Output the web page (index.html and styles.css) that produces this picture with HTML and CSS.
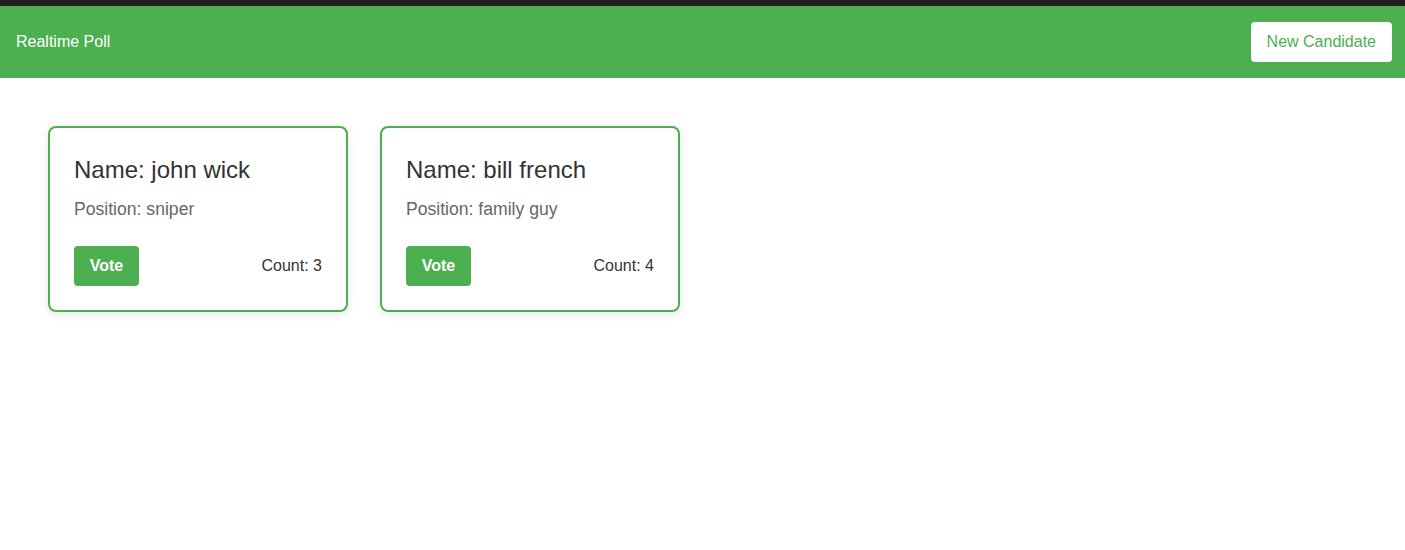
FILE: index.html
```html
<!DOCTYPE html>
<html>
<head>
<meta charset="utf-8">
<title>Realtime Poll</title>
<link rel="stylesheet" href="styles.css">
</head>
<body>
<div class="topbar"></div>
<nav class="nav">
  <span class="brand">Realtime Poll</span>
  <button class="new-btn">New Candidate</button>
</nav>
<main class="main">
  <div class="card">
    <h2 class="name">Name: john wick</h2>
    <p class="position">Position: sniper</p>
    <div class="card-foot">
      <button class="vote">Vote</button>
      <span class="count">Count: 3</span>
    </div>
  </div>
  <div class="card">
    <h2 class="name">Name: bill french</h2>
    <p class="position">Position: family guy</p>
    <div class="card-foot">
      <button class="vote">Vote</button>
      <span class="count">Count: 4</span>
    </div>
  </div>
</main>
</body>
</html>
```
FILE: styles.css
```css
* { box-sizing: border-box; }
html, body {
  margin: 0;
  padding: 0;
  background: #fff;
  font-family: "Liberation Sans", Arial, sans-serif;
  color: #333;
}
.topbar {
  height: 6px;
  background: #202020;
}
.nav {
  height: 72px;
  background: #4caf50;
  display: flex;
  align-items: center;
  justify-content: space-between;
  padding: 0 13px 0 16px;
}
.brand {
  color: #fff;
  font-size: 16px;
}
.new-btn {
  height: 40px;
  padding: 0 16px;
  background: #fff;
  color: #4caf50;
  border: none;
  border-radius: 4px;
  font-family: inherit;
  font-size: 16px;
}
.main {
  display: flex;
  gap: 32px;
  padding: 48px;
}
.card {
  width: 300px;
  border: 2px solid #4caf50;
  border-radius: 8px;
  padding: 24px;
  box-shadow: 0 2px 8px rgba(0, 0, 0, 0.1);
}
.name {
  margin: 0 0 7px;
  font-size: 24px;
  font-weight: normal;
  line-height: 36px;
  color: #333;
}
.position {
  margin: 0 0 23px;
  font-size: 17.6px;
  line-height: 28px;
  color: #666;
}
.card-foot {
  display: flex;
  align-items: center;
  justify-content: space-between;
}
.vote {
  height: 40px;
  width: 65px;
  padding: 0;
  background: #4caf50;
  color: #fff;
  border: none;
  border-radius: 4px;
  font-family: inherit;
  font-size: 16px;
  font-weight: bold;
}
.count {
  font-size: 16px;
  color: #333;
}
```
